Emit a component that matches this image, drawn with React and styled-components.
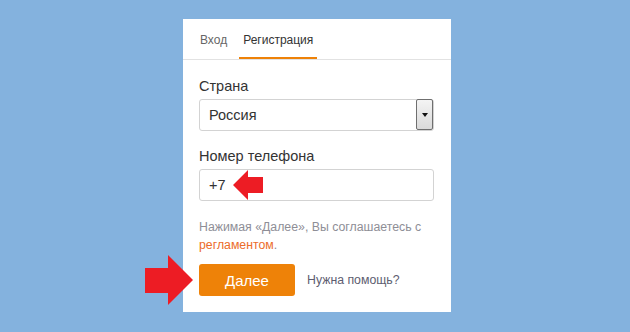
import React from 'react';
import styled, { createGlobalStyle } from 'styled-components';

const GlobalStyle = createGlobalStyle`
  html, body {
    margin: 0;
    padding: 0;
    background: #84b2de;
    font-family: "Liberation Sans", Arial, sans-serif;
  }
`;

const Page = styled.div`
  position: relative;
  width: 630px;
  height: 332px;
  padding: 19px 0 0 183px;
  box-sizing: border-box;
  overflow: hidden;
`;

const Panel = styled.div`
  width: 268px;
  height: 293px;
  background: #fff;
  box-sizing: border-box;
`;

const TabBar = styled.div`
  display: flex;
  gap: 8px;
  padding: 0 13px;
  height: 40px;
  border-bottom: 1px solid #e2e2e2;
`;

const Tab = styled.div`
  padding: 1px 4px 0;
  font-size: 12px;
  line-height: 40px;
  height: 40px;
  box-sizing: border-box;
  color: ${p => (p.$active ? '#333' : '#666')};
  border-bottom: 2px solid ${p => (p.$active ? '#ee8208' : 'transparent')};
  margin-bottom: -1px;
`;

const Body = styled.div`
  padding: 17px 17px 0 16px;
`;

const Label = styled.div`
  font-size: 14.5px;
  line-height: 18px;
  color: #333;
  margin-bottom: 4px;
`;

const Field = styled.div`
  display: flex;
  align-items: center;
  height: 32px;
  box-sizing: border-box;
  border: 1px solid #d3d3d3;
  border-radius: 3px;
  padding-left: 9px;
  font-size: 14.5px;
  color: #333;
  margin-bottom: ${p => p.$gap || 0}px;
`;

const FieldText = styled.span`
  flex: 1;
`;

const DropButton = styled.span`
  width: 17px;
  height: 31px;
  box-sizing: border-box;
  border: 1px solid #6f6f6f;
  border-radius: 2px;
  background: linear-gradient(#f4f4f4, #dadada);
  display: flex;
  align-items: center;
  justify-content: center;
  align-self: flex-start;
  margin-top: -1px;

  &::after {
    content: '';
    border-left: 3.5px solid transparent;
    border-right: 3.5px solid transparent;
    border-top: 4px solid #111;
  }
`;

const Hint = styled.div`
  margin-top: 17px;
  font-size: 12.3px;
  line-height: 18px;
  color: #8e8e96;
`;

const Link = styled.span`
  color: #ec6c2a;
`;

const Actions = styled.div`
  display: flex;
  align-items: center;
  gap: 12px;
  margin-top: 10px;
`;

const Button = styled.div`
  width: 96px;
  height: 32px;
  border-radius: 3px;
  background: #ee8208;
  color: #fff;
  font-size: 15px;
  display: flex;
  align-items: center;
  justify-content: center;
`;

const Help = styled.span`
  font-size: 12.3px;
  color: #5d5d70;
`;

const Arrow = styled.svg`
  position: absolute;
  left: ${p => p.$x}px;
  top: ${p => p.$y}px;
`;

export default function App() {
  return (
    <>
      <GlobalStyle />
      <Page>
        <Panel>
          <TabBar>
            <Tab>Вход</Tab>
            <Tab $active>Регистрация</Tab>
          </TabBar>
          <Body>
            <Label>Страна</Label>
            <Field $gap={16}>
              <FieldText>Россия</FieldText>
              <DropButton />
            </Field>
            <Label>Номер телефона</Label>
            <Field>
              <FieldText>+7</FieldText>
            </Field>
            <Hint>
              Нажимая «Далее», Вы соглашаетесь с <Link>регламентом</Link>.
            </Hint>
            <Actions>
              <Button>Далее</Button>
              <Help>Нужна помощь?</Help>
            </Actions>
          </Body>
        </Panel>
        <Arrow $x={233} $y={170} width="31" height="31" viewBox="0 0 31 31">
          <polygon points="0,15 15,0 15,7 30,7 30,23 15,23 15,30" fill="#ed1c24" />
        </Arrow>
        <Arrow $x={145} $y={255} width="49" height="51" viewBox="0 0 49 51">
          <polygon points="48,25 23,0 23,13 0,13 0,38 23,38 23,50" fill="#ed1c24" />
        </Arrow>
      </Page>
    </>
  );
}
